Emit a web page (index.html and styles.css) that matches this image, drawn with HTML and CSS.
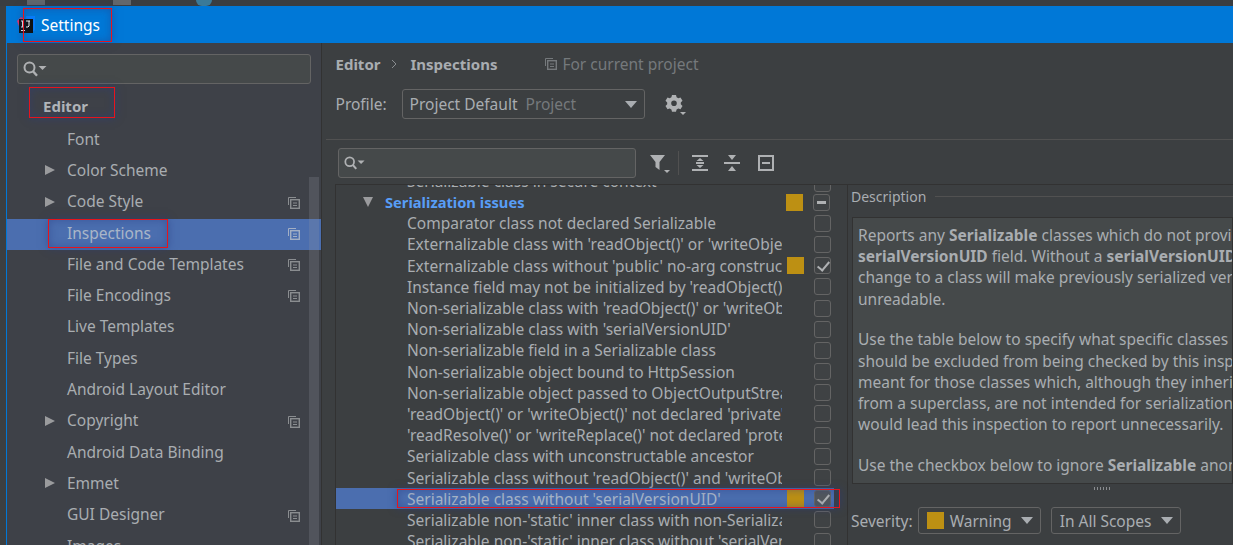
FILE: index.html
```html
<!DOCTYPE html>
<html lang="en">
<head>
<meta charset="utf-8">
<title>Settings</title>
<link rel="stylesheet" href="styles.css">
</head>
<body>
<svg class="defs" width="0" height="0" aria-hidden="true">
  <symbol id="copy" viewBox="0 0 12 12"><path d="M.5 8V.5H8" fill="none" stroke="currentColor"/><rect x="2.700" y="2.700" width="8.600" height="8.600" fill="none" stroke="currentColor" stroke-width="1.400"/><path d="M5 6h4M5 8.500h4" stroke="currentColor"/></symbol>
  <symbol id="search" viewBox="0 0 24 16"><circle cx="6.500" cy="6.500" r="5" fill="none" stroke="currentColor" stroke-width="2"/><path d="M10 10.200l4 4.500" stroke="currentColor" stroke-width="2.400"/><path d="M15.500 5h8l-4 4z" fill="currentColor"/></symbol>
</svg>
<div class="strip"><span class="strip-folder f1"></span><span class="strip-folder f2"></span><span class="strip-dot"></span></div>
<div class="window">
  <header class="titlebar">
    <svg class="logo" width="18" height="18" viewBox="0 0 18 18"><path d="M0 5l4-4 5 3-6 9z" fill="#e3336f"/><path d="M9 0h9v14l-4 3-7-3z" fill="#087cfa"/><rect x="2" y="3" width="14" height="14" fill="#111"/><path d="M4 5h3M5.500 5v6M4 11h3M9 5h4M12 5v5l-1 1H9M4 14.500h4" stroke="#fff" stroke-width="1" fill="none"/></svg>
    <span class="title">Settings</span>
  </header>
  <div class="panes">
    <aside class="sidebar">
      <div class="search side-search"><svg class="search-ico" width="24" height="16"><use href="#search"/></svg></div>
      <div class="group">Editor</div>
      <ul class="tree">
        <li class="node">Font</li>
        <li class="node arrow">Color Scheme</li>
        <li class="node arrow copy">Code Style<svg class="copy-ico" width="12" height="12"><use href="#copy"/></svg></li>
        <li class="node copy selected">Inspections<svg class="copy-ico" width="12" height="12"><use href="#copy"/></svg></li>
        <li class="node copy">File and Code Templates<svg class="copy-ico" width="12" height="12"><use href="#copy"/></svg></li>
        <li class="node copy">File Encodings<svg class="copy-ico" width="12" height="12"><use href="#copy"/></svg></li>
        <li class="node">Live Templates</li>
        <li class="node">File Types</li>
        <li class="node">Android Layout Editor</li>
        <li class="node arrow copy">Copyright<svg class="copy-ico" width="12" height="12"><use href="#copy"/></svg></li>
        <li class="node">Android Data Binding</li>
        <li class="node arrow">Emmet</li>
        <li class="node copy">GUI Designer<svg class="copy-ico" width="12" height="12"><use href="#copy"/></svg></li>
        <li class="node">Images</li>
      </ul>
      <div class="scrollbar"></div>
    </aside>
    <main class="main">
      <div class="crumbs">
        <b class="crumb">Editor</b><svg class="sep" width="8" height="12" viewBox="0 0 8 12"><path d="M2 2l4 4-4 4" fill="none" stroke="#8a8d90"/></svg><b class="crumb">Inspections</b>
        <span class="scope"><svg class="copy-ico-inline" width="12" height="12"><use href="#copy"/></svg>For current project</span>
      </div>
      <div class="profile">
        <span class="label">Profile:</span>
        <div class="combo profile-combo"><span>Project Default</span><span class="dim">Project</span><i class="caret push"></i></div>
        <svg class="gear" width="22" height="22" viewBox="0 0 22 22"><path fill="#afb1b3" fill-rule="evenodd" d="M7 2h4l.6 2.300 1.700.9 2.200-.8 2 3.400-1.700 1.600v1.900l1.700 1.600-2 3.400-2.200-.8-1.700.9L11 18.700H7l-.6-2.300-1.700-.9-2.200.8-2-3.400 1.700-1.600V9.400L.5 7.800l2-3.400 2.200.8 1.700-.9zM9 7.500a2.800 2.800 0 1 0 0 5.600 2.800 2.800 0 0 0 0-5.600z"/><path d="M15 19h6l-3 3z" fill="#afb1b3"/></svg>
      </div>
      <div class="rule"></div>
      <div class="toolbar">
        <div class="search tool-search"><svg class="search-ico small" width="21" height="14"><use href="#search"/></svg></div>
        <svg class="tool t-filter" width="20" height="20" viewBox="0 0 20 20"><path d="M0 2h15l-5.500 7v8l-4-3V9z" fill="#afb1b3"/><path d="M14 17h6l-3 3z" fill="#afb1b3"/></svg>
        <span class="tool-sep"></span>
        <svg class="tool t-expand" width="16" height="18" viewBox="0 0 16 18"><g fill="#afb1b3"><rect y="1" width="16" height="2"/><rect y="15" width="16" height="2"/><rect x="4" y="8" width="8" height="2"/><path d="M8 4l3.500 3h-7zM8 14l-3.500-3h7z"/></g></svg>
        <svg class="tool t-collapse" width="16" height="18" viewBox="0 0 16 18"><g fill="#afb1b3"><rect y="8" width="16" height="2"/><path d="M4 1h8L8 6zM8 12l4 5H4z"/></g></svg>
        <svg class="tool t-box" width="16" height="16" viewBox="0 0 16 16"><path d="M1 1h14v14H1z" fill="none" stroke="#afb1b3" stroke-width="2"/><rect x="4" y="7" width="8" height="2" fill="#afb1b3"/></svg>
      </div>
      <div class="work">
        <section class="list">
          <div class="row cut"><span class="name">Serializable class in secure context</span><i class="sev none"></i><i class="check"></i></div>
          <div class="row group-row"><i class="tri"></i><span class="name">Serialization issues</span><i class="sev"></i><i class="check mixed"></i></div>
          <div class="row"><span class="name">Comparator class not declared Serializable</span><i class="sev none"></i><i class="check"></i></div>
          <div class="row"><span class="name">Externalizable class with 'readObject()' or 'writeObject()'</span><i class="sev none"></i><i class="check"></i></div>
          <div class="row"><span class="name">Externalizable class without 'public' no-arg constructor</span><i class="sev"></i><i class="check on"></i></div>
          <div class="row"><span class="name">Instance field may not be initialized by 'readObject()'</span><i class="sev none"></i><i class="check"></i></div>
          <div class="row"><span class="name">Non-serializable class with 'readObject()' or 'writeObject()'</span><i class="sev none"></i><i class="check"></i></div>
          <div class="row"><span class="name">Non-serializable class with 'serialVersionUID'</span><i class="sev none"></i><i class="check"></i></div>
          <div class="row"><span class="name">Non-serializable field in a Serializable class</span><i class="sev none"></i><i class="check"></i></div>
          <div class="row"><span class="name">Non-serializable object bound to HttpSession</span><i class="sev none"></i><i class="check"></i></div>
          <div class="row"><span class="name">Non-serializable object passed to ObjectOutputStream</span><i class="sev none"></i><i class="check"></i></div>
          <div class="row"><span class="name">'readObject()' or 'writeObject()' not declared 'private'</span><i class="sev none"></i><i class="check"></i></div>
          <div class="row"><span class="name">'readResolve()' or 'writeReplace()' not declared 'protected'</span><i class="sev none"></i><i class="check"></i></div>
          <div class="row"><span class="name">Serializable class with unconstructable ancestor</span><i class="sev none"></i><i class="check"></i></div>
          <div class="row"><span class="name">Serializable class without 'readObject()' and 'writeObject()'</span><i class="sev none"></i><i class="check"></i></div>
          <div class="row selected"><span class="name">Serializable class without 'serialVersionUID'</span><i class="sev"></i><i class="check on"></i></div>
          <div class="row"><span class="name">Serializable non-'static' inner class with non-Serializable outer</span><i class="sev none"></i><i class="check"></i></div>
          <div class="row"><span class="name">Serializable non-'static' inner class without 'serialVersionUID'</span><i class="sev none"></i><i class="check"></i></div>
        </section>
        <section class="detail">
          <div class="legend"><span>Description</span><i class="legend-line"></i></div>
          <div class="desc">
            <p>Reports any <b>Serializable</b> classes which do not provide a<br><b>serialVersionUID</b> field. Without a <b>serialVersionUID</b> field, any<br>change to a class will make previously serialized versions<br>unreadable.</p>
            <p>Use the table below to specify what specific classes<br>should be excluded from being checked by this inspection. This is<br>meant for those classes which, although they inherit Serializable<br>from a superclass, are not intended for serialization. Fixing them<br>would lead this inspection to report unnecessarily.</p>
            <p>Use the checkbox below to ignore <b>Serializable</b> anonymous classes.</p>
          </div>
          <div class="grip"></div>
          <div class="severity">
            <span class="label">Severity:</span>
            <div class="combo sev-combo"><i class="sev"></i><span>Warning</span><i class="caret push"></i></div>
            <div class="combo scope-combo"><span>In All Scopes</span><i class="caret push"></i></div>
          </div>
        </section>
      </div>
    </main>
  </div>
</div>
<div class="mark mark-title"></div>
<div class="mark mark-editor"></div>
<div class="mark mark-insp"></div>
<div class="mark mark-row"></div>
</body>
</html>
```
FILE: styles.css
```css
* { box-sizing: border-box; }
html, body { margin: 0; height: 100%; overflow: hidden; }
body { position: relative; background: #3c3f41; color: #a9adb1; font: 15.500px "Noto Sans", "Open Sans", sans-serif; }
.defs { position: absolute; }
.strip { height: 6px; background: #3a3d40; overflow: hidden; position: relative; }
.strip-folder { position: absolute; top: 0; width: 18px; height: 5px; background: #63676b; }
.f1 { left: 27px; }
.f2 { left: 113px; }
.strip-dot { position: absolute; left: 196px; top: 0; width: 16px; height: 6px; background: #3a7a99; border-radius: 0 0 8px 8px; }
.window { margin-left: 6px; height: 539px; display: flex; flex-direction: column; border-left: 1px solid #0078d7; overflow: hidden; }
.titlebar { height: 37px; flex: none; background: #0078d7; display: flex; align-items: center; padding-left: 10px; color: #fff; }
.logo { margin-right: 6px; }
.panes { flex: 1; display: flex; min-height: 0; }
.sidebar { width: 315px; flex: none; background: #3e4148; position: relative; overflow: hidden; border-right: 1px solid #323232; padding-top: 11px; }
.search { height: 30px; background: #45494a; border: 1px solid #646464; border-radius: 3px; display: flex; align-items: center; padding-left: 5px; }
.search-ico { color: #afb1b3; }
.side-search { margin: 0 10px; width: 294px; }
.group { font-weight: 700; font-size: 15px; height: 22px; margin: 12px 0 0 36px; color: #b1b5b9; }
.tree { list-style: none; margin: 7px 0 0; padding: 0; }
.node { height: 31.300px; display: flex; align-items: center; padding: 0 0 4px 60px; position: relative; }
.node.arrow::before { content: ""; position: absolute; left: 38px; top: 9px; border-left: 10px solid #9a9b9d; border-top: 5.500px solid transparent; border-bottom: 5.500px solid transparent; }
.node.selected { background: #4b6eaf; color: #a9b6c8; }
.copy-ico { position: absolute; left: 281px; top: 9px; color: #8a8d90; }
.selected .copy-ico { color: #a3afc4; }
.scrollbar { position: absolute; left: 302px; top: 134px; width: 10px; bottom: 0; background: rgba(150,155,165,.22); }
.main { flex: 1; min-width: 0; background: #3c3f41; padding-left: 13.500px; overflow: hidden; }
.crumbs { height: 21px; margin-top: 10px; display: flex; align-items: center; white-space: nowrap; }
.crumb { font-weight: 700; font-size: 15px; }
.sep { margin: 0 12px 0 10px; }
.scope { color: #75797c; margin-left: 48px; display: flex; align-items: center; }
.copy-ico-inline { margin-right: 5px; color: #75797c; }
.profile { height: 30px; margin-top: 15px; display: flex; align-items: center; }
.label { margin-right: 15px; }
.combo { height: 30px; background: #3c3f41; border: 1px solid #646464; border-radius: 3px; display: flex; align-items: center; padding: 0 7px; }
.profile-combo { width: 243px; flex: none; }
.dim { color: #75797c; margin-left: 8px; }
.caret { border-top: 7px solid #a9adb1; border-left: 6px solid transparent; border-right: 6px solid transparent; }
.push { margin-left: auto; }
.gear { margin-left: 20px; }
.rule { height: 1px; background: #515151; margin: 20px 0 0 -10px; }
.toolbar { height: 30px; margin-top: 8px; margin-left: 2.500px; display: flex; align-items: center; }
.tool-search { width: 298px; flex: none; }
.tool { margin-left: 13px; flex: none; }
.t-filter { margin-left: 14px; }
.tool-sep { width: 1px; height: 24px; background: #515151; margin-left: 8px; }
.t-collapse { margin-left: 16px; }
.t-box { margin-left: 18px; }
.work { display: flex; margin-top: 6px; border-top: 1px solid #323232; margin-left: -.500px; }
.list { width: 513px; flex: none; border-left: 1px solid #323232; border-right: 1px solid #323232; height: 400px; overflow: hidden; position: relative; }
.row { height: 21.200px; width: 498px; display: flex; align-items: center; padding-left: 71px; white-space: nowrap; }
.row.cut { height: 6.500px; align-items: flex-end; overflow: hidden; }
.name { width: 375px; overflow: hidden; flex: none; }
.sev { width: 17px; height: 17px; background: #bd9013; margin-left: 5px; flex: none; display: block; }
.sev.none { background: none; }
.check { width: 17px; height: 17px; margin-left: 10px; flex: none; border: 1px solid #646464; border-radius: 3px; background: #3f4244; position: relative; }
.selected .check { background: #53575c; }
.check.on::after { content: ""; position: absolute; left: 5px; top: 1px; width: 5px; height: 10px; border: solid #afb1b3; border-width: 0 2px 2px 0; transform: rotate(40deg); }
.check.mixed::after { content: ""; position: absolute; left: 3px; top: 6px; width: 9px; height: 3px; background: #afb1b3; }
.group-row { padding-left: 50px; color: #589df6; font-weight: 700; font-size: 14.700px; }
.group-row .name { width: 395px; }
.tri { width: 0; height: 0; border-top: 10px solid #9a9b9d; border-left: 5.500px solid transparent; border-right: 5.500px solid transparent; margin: 0 12px 0 -23px; flex: none; }
.group-row .tri + .name { margin-left: 0; width: 396px; }
.row.selected { background: #4b6eaf; }
.row.selected .name { color: #a9b6c8; }
.detail { flex: 1; min-width: 0; padding-left: 3px; white-space: nowrap; overflow: hidden; }
.legend { display: flex; align-items: center; height: 23px; font-size: 14px; }
.legend-line { flex: 1; height: 1px; background: #515151; margin-left: 9px; }
.desc { height: 267px; margin-top: 9px; background: #45494a; border: 1px solid #323232; margin-left: 1px; padding: 7px 5px; line-height: 21.200px; overflow: hidden; }
.desc p { margin: 0 0 19.500px; }
.grip { height: 3px; width: 18px; margin: 3px 0 0 243px; background: repeating-linear-gradient(90deg, #8a8d90 0 1px, transparent 1px 3px); }
.severity { margin-top: 17px; display: flex; align-items: center; }
.severity .label { margin-right: 5px; }
.sev-combo { width: 123px; height: 27px; padding-left: 8px; flex: none; }
.sev-combo .sev { margin: 0 6px 0 0; }
.scope-combo { width: 130px; height: 27px; margin-left: 10px; padding-left: 8px; flex: none; }
.mark { position: absolute; border: 1px solid #e8141c; box-shadow: 0 0 8px rgba(40,60,130,.55), inset 0 0 8px rgba(40,60,130,.45); pointer-events: none; }
.mark-title { left: 23px; top: 8px; width: 89px; height: 34px; }
.mark-editor { left: 29px; top: 87px; width: 86px; height: 31px; }
.mark-insp { left: 48px; top: 219px; width: 120px; height: 29px; }
.mark-row { left: 397px; top: 489px; width: 443px; height: 19px; }
```
